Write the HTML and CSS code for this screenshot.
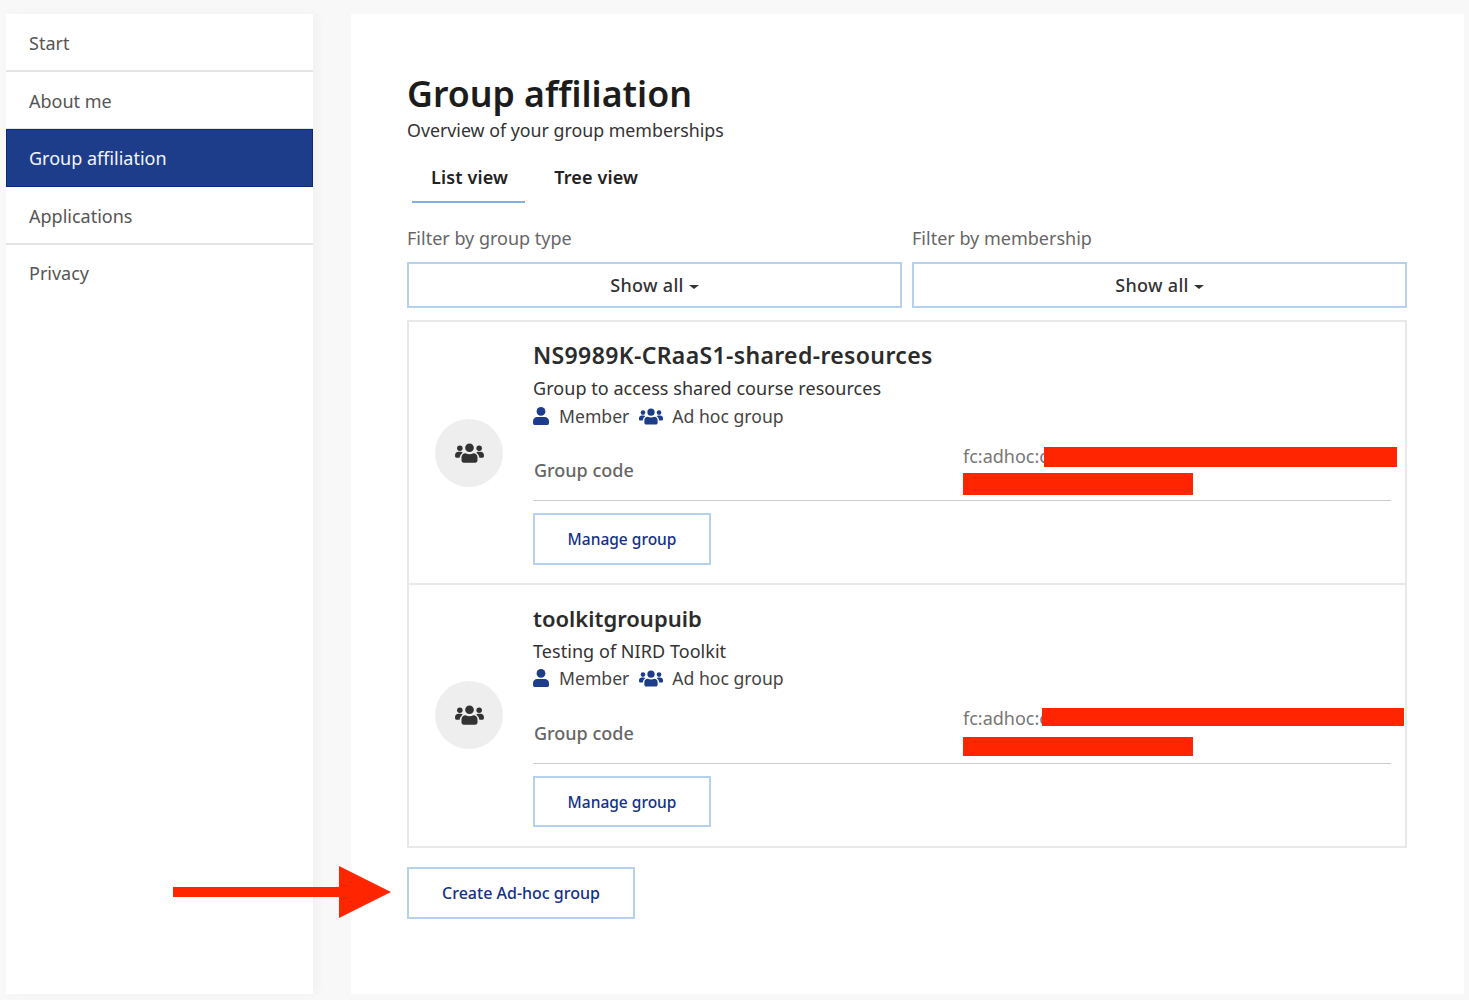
FILE: index.html
```html
<!DOCTYPE html>
<html lang="en">
<head>
    <meta charset="UTF-8">
    <meta name="viewport" content="width=device-width, initial-scale=1.0">
    <title>Group affiliation</title>
    <link rel="stylesheet" href="styles.css">
</head>
<body>
    <svg class="icon-defs" width="0" height="0" aria-hidden="true">
        <symbol id="icon-user" viewBox="0 0 16 18">
            <circle cx="8" cy="4.4" r="4.4"/>
            <path d="M4.2 10h7.6A4.2 4.2 0 0 1 16 14.2v2.1a1.7 1.7 0 0 1-1.7 1.7H1.700A1.700 1.700 0 0 1 0 16.300v-2.100A4.200 4.200 0 0 1 4.200 10z"/>
        </symbol>
        <symbol id="icon-users" viewBox="0 0 26 18">
            <circle cx="13" cy="4.300" r="3.900"/>
            <circle cx="4.300" cy="4.800" r="2.500"/>
            <circle cx="21.700" cy="4.800" r="2.500"/>
            <path d="M9.500 9.300c1 .5 2.200.8 3.500.8s2.500-.3 3.500-.8c2.200 0 3.700 1.600 3.700 3.700v2.700c0 1.100-.9 2-2 2H7.800c-1.100 0-2-.9-2-2V13c0-2.100 1.500-3.700 3.700-3.700z"/>
            <path d="M6.900 8.700C5.300 9.700 4.300 11.300 4.100 13.300H1.400C.6 13.300 0 12.700 0 11.900v-1.100C0 9.100 1.300 7.800 3 7.800h2.200c.6 0 1.200.3 1.700.9z"/>
            <path d="M19.100 8.700c1.600 1 2.600 2.600 2.800 4.600h2.700c.8 0 1.400-.6 1.400-1.400v-1.100c0-1.700-1.300-3-3-3h-2.200c-.6 0-1.200.3-1.700.9z"/>
        </symbol>
    </svg>

    <div class="page">
        <nav class="sidebar">
            <a class="nav-item">Start</a>
            <a class="nav-item">About me</a>
            <a class="nav-item active">Group affiliation</a>
            <a class="nav-item">Applications</a>
            <a class="nav-item last">Privacy</a>
        </nav>

        <main class="content">
            <h1>Group affiliation</h1>
            <p class="subtitle">Overview of your group memberships</p>

            <div class="tabs">
                <a class="tab active">List view</a>
                <a class="tab">Tree view</a>
            </div>

            <div class="filters">
                <div class="filter">
                    <label>Filter by group type</label>
                    <button class="select">Show all<span class="caret"></span></button>
                </div>
                <div class="filter">
                    <label>Filter by membership</label>
                    <button class="select">Show all<span class="caret"></span></button>
                </div>
            </div>

            <div class="groups">
                <section class="group">
                    <div class="avatar"><svg class="avatar-icon"><use href="#icon-users"/></svg></div>
                    <div class="group-body">
                        <h2>NS9989K-CRaaS1-shared-resources</h2>
                        <p class="desc">Group to access shared course resources</p>
                        <p class="meta">
                            <svg class="icon-member"><use href="#icon-user"/></svg><span>Member</span>
                            <svg class="icon-adhoc"><use href="#icon-users"/></svg><span>Ad hoc group</span>
                        </p>
                        <div class="code-row">
                            <span class="code-label">Group code</span>
                            <span class="code-value">fc:adhoc:c
                                <i class="redact redact-a1"></i>
                                <i class="redact redact-a2"></i>
                            </span>
                        </div>
                        <button class="btn">Manage group</button>
                    </div>
                </section>

                <section class="group second">
                    <div class="avatar"><svg class="avatar-icon"><use href="#icon-users"/></svg></div>
                    <div class="group-body">
                        <h2>toolkitgroupuib</h2>
                        <p class="desc">Testing of NIRD Toolkit</p>
                        <p class="meta">
                            <svg class="icon-member"><use href="#icon-user"/></svg><span>Member</span>
                            <svg class="icon-adhoc"><use href="#icon-users"/></svg><span>Ad hoc group</span>
                        </p>
                        <div class="code-row">
                            <span class="code-label">Group code</span>
                            <span class="code-value">fc:adhoc:c
                                <i class="redact redact-b1"></i>
                                <i class="redact redact-b2"></i>
                            </span>
                        </div>
                        <button class="btn">Manage group</button>
                    </div>
                </section>
            </div>

            <div class="create-row">
                <svg class="arrow" width="218" height="52" viewBox="0 0 218 52">
                    <path d="M0 21H166V0L218 26 166 52V31H0z"/>
                </svg>
                <button class="btn create">Create Ad-hoc group</button>
            </div>
        </main>
    </div>
</body>
</html>
```

FILE: styles.css
```css
* {
    box-sizing: border-box;
}
html, body {
    height: 100%;
}
body {
    margin: 0;
    background-color: #f8f8f8;
    font-family: "Noto Sans", Arial, sans-serif;
    font-size: 18px;
    color: #222;
}
.icon-defs {
    position: absolute;
}
.page {
    display: flex;
    gap: 38px;
    height: 1000px;
    padding: 14px 5px 6px 6px;
}

/* sidebar */
.sidebar {
    width: 307px;
    background-color: #fff;
    box-shadow: 4px 0 10px rgba(0, 0, 0, 0.03);
}
.nav-item {
    display: flex;
    align-items: center;
    height: 58px;
    padding: 1px 23px 0;
    border-bottom: 2px solid #e4e4e4;
    color: #555;
}
.nav-item.active {
    margin-top: -1px;
    padding: 0 22px 1px;
    background-color: #1d3d8a;
    border: 1px solid #0b2a86;
    color: #f2f5fb;
}
.nav-item.last {
    padding: 0 23px 3px;
    border-bottom: 0;
}

/* main column */
.content {
    flex: 1;
    background-color: #fff;
    padding: 57px 57px 0 56px;
}
h1 {
    margin: 0;
    height: 46px;
    font-size: 35.7px;
    line-height: 44px;
    font-weight: 600;
    color: #1c1c1c;
}
.subtitle {
    margin: 0;
    height: 26px;
    font-size: 17.8px;
    line-height: 26px;
    color: #333;
}
.tabs {
    display: flex;
    gap: 10px;
    margin: 9px 0 0 5px;
}
.tab {
    height: 51px;
    padding: 13px 17px 0 19px;
    font-weight: 600;
    letter-spacing: 0.15px;
    color: #222;
}
.tab.active {
    border-bottom: 2px solid #7fb0e6;
}
.filters {
    display: flex;
    gap: 10px;
    margin-top: 22px;
}
.filter {
    flex: 1;
}
.filter label {
    display: block;
    height: 37px;
    line-height: 26px;
    color: #666;
}
.select {
    display: block;
    width: 100%;
    height: 46px;
    background-color: #fff;
    border: 2px solid #b4d2f0;
    font: inherit;
    font-weight: 500;
    letter-spacing: 0.3px;
    color: #333;
}
.caret {
    display: inline-block;
    margin-left: 5px;
    vertical-align: 3px;
    border-top: 4px solid #333;
    border-left: 5px solid transparent;
    border-right: 5px solid transparent;
}

/* group cards */
.groups {
    margin-top: 12px;
}
.group {
    display: flex;
    align-items: center;
    height: 265px;
    padding: 0 14px 0 26px;
    border: 2px solid #e9e9e9;
}
.group.second {
    height: 263px;
    border-top: 0;
}
.avatar {
    display: flex;
    align-items: center;
    justify-content: center;
    flex: none;
    width: 68px;
    height: 68px;
    margin: 1px 30px 0 0;
    border-radius: 50%;
    background-color: #eee;
}
.second .avatar {
    margin: 0 30px 1px 0;
}
.avatar-icon {
    width: 29px;
    height: 20px;
    fill: #333;
}
.group-body {
    flex: 1;
    align-self: flex-start;
    padding-top: 16px;
}
h2 {
    margin: 0;
    height: 35px;
    font-size: 23px;
    line-height: 34px;
    font-weight: 600;
    letter-spacing: 0.36px;
    color: #2b2b2b;
}
.second h2 {
    font-size: 22px;
    letter-spacing: 0;
}
.desc {
    margin: 0;
    height: 30px;
    line-height: 30px;
    letter-spacing: 0.05px;
    color: #333;
}
.meta {
    display: flex;
    align-items: center;
    margin: -1px 0 0;
    height: 28px;
    font-size: 17.6px;
    color: #444;
}
.second .meta {
    margin-top: -2px;
}
.icon-member {
    width: 16px;
    height: 18px;
    margin-right: 10px;
    fill: #1d3d8a;
}
.icon-adhoc {
    width: 24px;
    height: 17px;
    margin: 0 9px 0 10px;
    fill: #1d3d8a;
}
.code-row {
    display: flex;
    align-items: center;
    height: 58px;
    margin-top: 13px;
    border-bottom: 1px solid #ccc;
}
.second .code-row {
    margin-top: 14px;
}
.code-label {
    flex: none;
    width: 430px;
    padding: 0 0 3px 1px;
    font-weight: 500;
    color: #666;
}
.code-value {
    position: relative;
    align-self: flex-start;
    height: 53px;
    line-height: 26px;
    color: #777;
}
.second .code-value {
    line-height: 24px;
}
.redact {
    position: absolute;
    background-color: #fe2500;
}
.redact-a1 {
    left: 81px;
    top: 4px;
    width: 353px;
    height: 20px;
}
.redact-a2 {
    left: 0;
    top: 30px;
    width: 230px;
    height: 22px;
}
.redact-b1 {
    left: 79px;
    top: 2px;
    width: 362px;
    height: 18px;
}
.redact-b2 {
    left: 0;
    top: 31px;
    width: 230px;
    height: 19px;
}
.btn {
    display: block;
    width: 178px;
    height: 52px;
    margin-top: 12px;
    background-color: #fff;
    border: 2px solid #b4d2f0;
    font: inherit;
    font-size: 15.5px;
    font-weight: 500;
    color: #13308a;
}
.second .btn {
    height: 51px;
}
.create-row {
    position: relative;
    margin-top: 19px;
}
.btn.create {
    width: 228px;
    margin-top: 0;
    font-size: 16px;
}
.arrow {
    position: absolute;
    left: -234px;
    top: -1px;
    fill: #fe2500;
}
```
